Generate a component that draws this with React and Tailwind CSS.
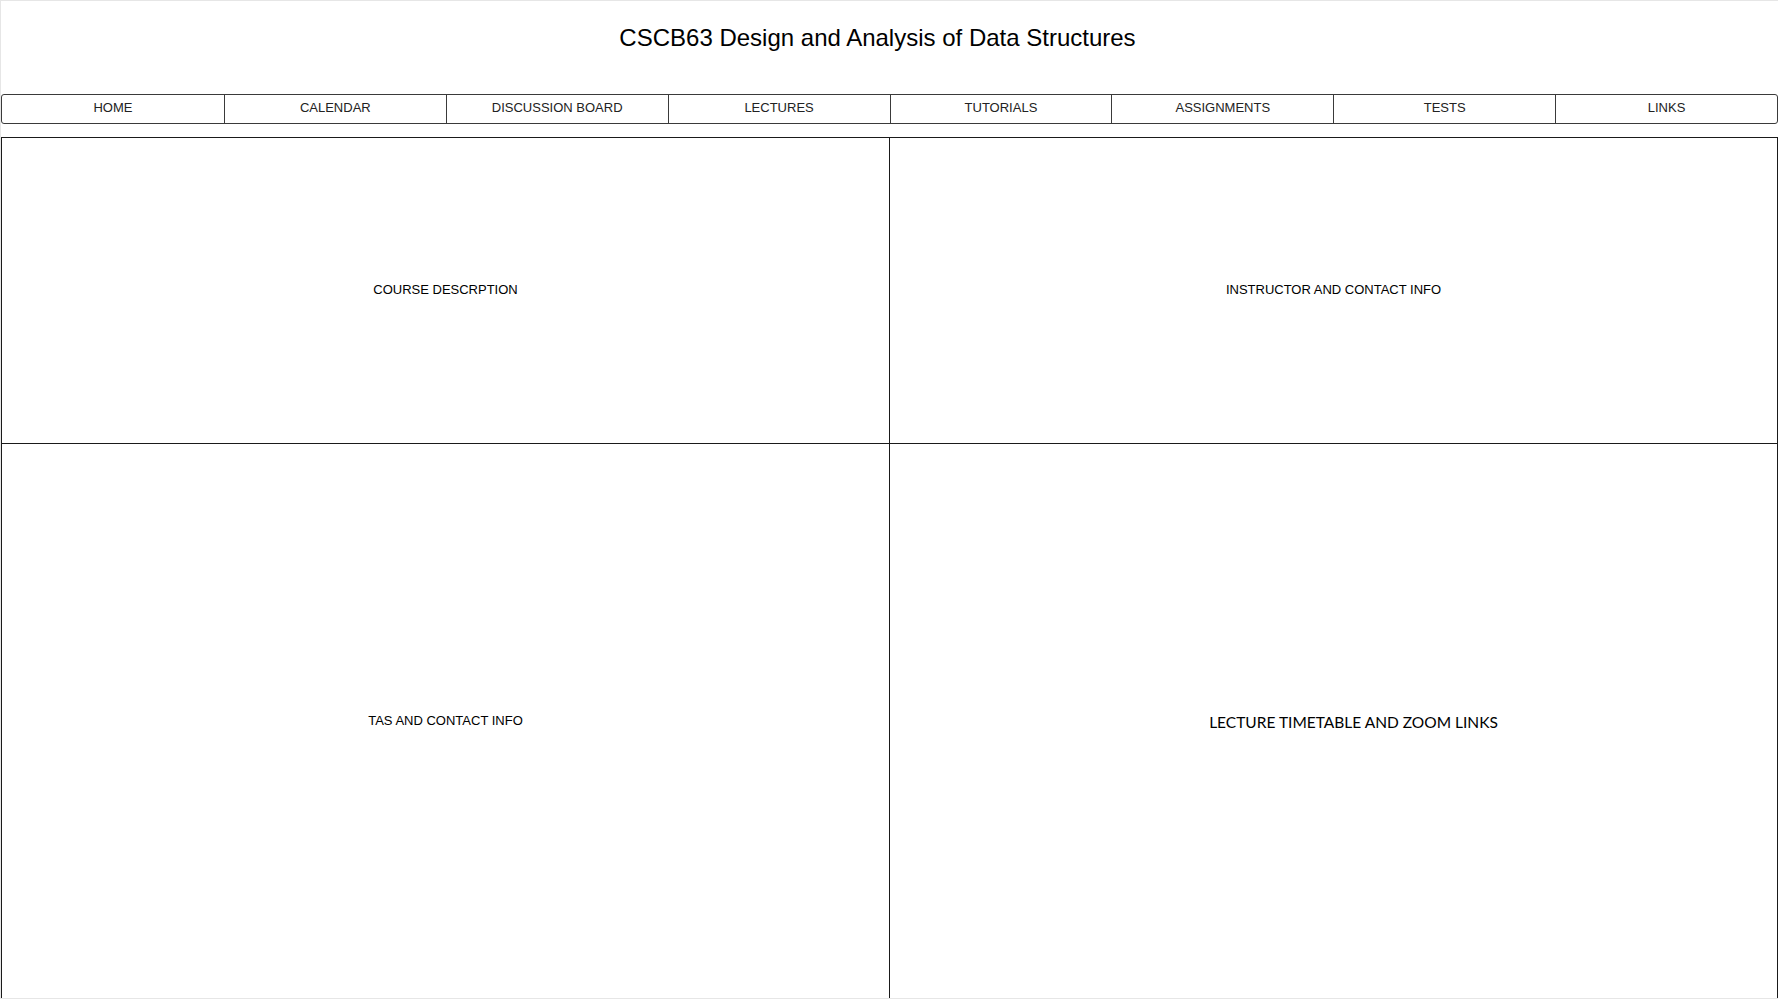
const navItems = [
  'HOME',
  'CALENDAR',
  'DISCUSSION BOARD',
  'LECTURES',
  'TUTORIALS',
  'ASSIGNMENTS',
  'TESTS',
  'LINKS',
];

export default function App() {
  return (
    <div
      className="h-[999px] w-[1778px] overflow-hidden border-t border-b border-l border-[#e6e6e6] bg-white text-black"
      style={{ fontFamily: '"Liberation Sans", Arial, sans-serif' }}
    >
      {/* title */}
      <div className="flex h-[93px] justify-center pt-[23px] pr-[24px]">
        <h1 className="text-[24px] leading-[28px]">
          CSCB63 Design and Analysis of Data Structures
        </h1>
      </div>

      {/* nav bar */}
      <div className="grid h-[30px] w-[1777px] grid-cols-8 rounded-[3px] border border-[#3a3a3a]">
        {navItems.map((item, i) => (
          <div
            key={item}
            className={`flex items-center justify-center pb-[2px] text-[13px] text-[#222] ${
              i > 0 ? 'border-l border-[#3a3a3a]' : ''
            }`}
          >
            {item}
          </div>
        ))}
      </div>

      {/* content boxes */}
      <div className="mt-[13px] grid h-[862px] w-[1777px] grid-cols-[888px_1fr] grid-rows-[306px_1fr] border-t border-r border-l border-[#1a1a1a]">
        <div className="flex items-center justify-center border-r border-b border-[#1a1a1a] pb-[2px] text-[13px]">
          COURSE DESCRPTION
        </div>
        <div className="flex items-center justify-center border-b border-[#1a1a1a] pb-[2px] text-[13px]">
          INSTRUCTOR AND CONTACT INFO
        </div>
        <div className="flex items-center justify-center border-r border-[#1a1a1a] pb-[2px] text-[13px]">
          TAS AND CONTACT INFO
        </div>
        <div className="flex items-center justify-center pt-[2px] pl-[40px]">
          <span
            className="text-[15.5px]"
            style={{ fontFamily: 'Lato, "Open Sans", sans-serif' }}
          >
            LECTURE TIMETABLE AND ZOOM LINKS
          </span>
        </div>
      </div>
    </div>
  );
}
